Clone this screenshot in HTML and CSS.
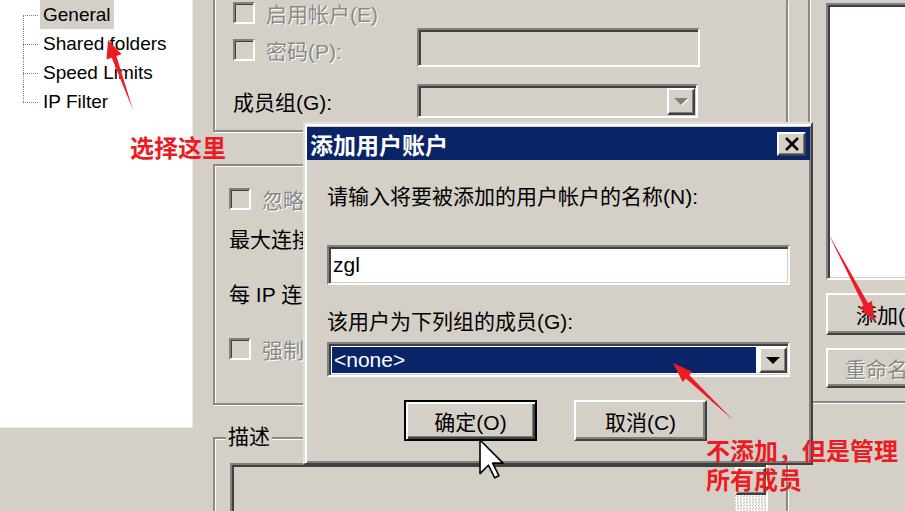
FILE: index.html
```html
<!DOCTYPE html>
<html lang="zh-CN">
<head>
    <meta charset="UTF-8">
    <meta name="viewport" content="width=device-width, initial-scale=1.0">
    <title>Users</title>
    <link rel="stylesheet" href="styles.css">
</head>
<body>
    <div class="screen">
        <div class="tree-col">
            <ul class="tree">
                <li class="selected"><span>General</span></li>
                <li><span>Shared folders</span></li>
                <li><span>Speed Limits</span></li>
                <li><span>IP Filter</span></li>
            </ul>
        </div>

        <div class="form-col">
            <div class="group group-account">
                <div class="row row-enable">
                    <span class="check"></span><span class="disabled">启用帐户(E)</span>
                </div>
                <div class="row row-pass">
                    <div class="field-label"><span class="check"></span><span class="disabled">密码(P):</span></div>
                    <div class="edit edit-pass"></div>
                </div>
                <div class="row row-member">
                    <div class="field-label">成员组(G):</div>
                    <div class="edit combo-off"><span class="drop drop-off"><i></i></span></div>
                </div>
            </div>

            <div class="group group-conn">
                <div class="row conn-a"><span class="check"></span><span class="disabled">忽略服务器的用户限制</span></div>
                <div class="row conn-b">最大连接数:</div>
                <div class="row conn-c">每 IP 连接限制:</div>
                <div class="row conn-d"><span class="check"></span><span class="disabled">强制 SSL 用户登录</span></div>
            </div>

            <div class="group group-desc">
                <span class="legend">描述</span>
                <div class="edit memo">
                    <div class="scroll"><span class="scroll-btn"></span><span class="scroll-track"></span></div>
                </div>
            </div>
        </div>

        <div class="side-col">
            <div class="group group-users">
                <div class="edit user-list"></div>
                <button class="btn side-btn">添加(A)</button>
                <button class="btn side-btn btn-off">重命名(R)</button>
            </div>
        </div>
    </div>

    <!-- modal dialog -->
    <div class="dialog">
        <div class="titlebar">
            <span>添加用户账户</span>
            <span class="close">
                <svg width="16" height="14" viewBox="0 0 16 14"><path d="M2 1 L14 13 M14 1 L2 13" stroke="#000" stroke-width="2.6" fill="none"/></svg>
            </span>
        </div>
        <div class="dialog-body">
            <div class="prompt">请输入将要被添加的用户帐户的名称(N):</div>
            <div class="edit name-edit">zgl</div>
            <div class="prompt prompt-group">该用户为下列组的成员(G):</div>
            <div class="edit group-combo">
                <span class="value">&lt;none&gt;</span>
                <span class="drop"><i></i></span>
            </div>
            <div class="dialog-buttons">
                <button class="btn btn-default">确定(O)</button>
                <button class="btn">取消(C)</button>
            </div>
        </div>
    </div>

    <!-- red annotations and mouse pointer -->
    <svg class="marks" width="905" height="511" viewBox="0 0 905 511">
        <polygon fill="#ec1c24" points="133,110 111.7,57.8 106.5,59.6 108,40 121.6,54.3 116.4,56.1"/>
        <polygon fill="#ec1c24" points="733,420 685.8,378.6 682.7,381.9 673,363 692.3,371.7 689.2,375"/>
        <polygon fill="#ec1c24" points="828,233 867.9,303.1 871.9,301 875,322 859.5,307.6 863.5,305.5"/>
        <polygon fill="#fff" stroke="#000" stroke-width="1.6" stroke-linejoin="round"
            points="480,440 480,473.6 488.4,465.2 494.7,477.8 498.9,475.7 492.6,463.1 503.1,463.1"/>
    </svg>
    <div class="note note-select">选择这里</div>
    <div class="note note-group">不添加，但是管理<br>所有成员</div>
</body>
</html>
```

FILE: styles.css
```css
* {
    box-sizing: border-box;
}
body {
    margin: 0;
    width: 905px;
    height: 511px;
    overflow: hidden;
    position: relative;
    background: #d4d0c8;
    font-family: "Liberation Sans", "Noto Sans CJK SC", sans-serif;
    font-size: 21px;
    color: #000;
}
.screen {
    display: flex;
    width: 905px;
    height: 511px;
    overflow: hidden;
}

/* tree on the left */
.tree-col {
    width: 213px;
    flex: none;
}
.tree {
    list-style: none;
    margin: 0;
    padding: 0;
    width: 193px;
    height: 428px;
    background: #fff;
    border-right: 1px solid #ebe9e4;
    border-bottom: 1px solid #ebe9e4;
    font-size: 19px;
}
.tree li {
    position: relative;
    height: 29px;
    padding-left: 40px;
    display: flex;
    align-items: center;
}
.tree li span {
    padding: 0 3px;
    line-height: 29px;
}
.tree li.selected span {
    background: #d4d0c8;
}
.tree li::before {
    content: "";
    position: absolute;
    left: 23px;
    width: 15px;
    top: 50%;
    border-top: 1px dotted #808080;
}
.tree li::after {
    content: "";
    position: absolute;
    left: 23px;
    top: 0;
    bottom: 0;
    border-left: 1px dotted #808080;
}
.tree li:first-child::after {
    top: 50%;
}
.tree li:last-child::after {
    bottom: 50%;
}

/* group boxes */
.form-col {
    width: 575px;
    flex: none;
    display: flex;
    flex-direction: column;
}
.group {
    flex: none;
    border: 2px solid #8c8a85;
    box-shadow: inset 1px 1px 0 #fff, 1px 1px 0 #fff;
}
.row {
    display: flex;
    align-items: center;
    white-space: nowrap;
}
.check {
    width: 22px;
    height: 22px;
    flex: none;
    border: 2px solid;
    border-color: #808080 #fff #fff #808080;
    box-shadow: inset 1px 1px 0 #404040;
    background: #d4d0c8;
    margin-right: 11px;
}
.disabled {
    color: #8a8985;
    text-shadow: 1px 1px 0 #fff;
}
.edit {
    border: 2px solid;
    border-color: #808080 #fff #fff #808080;
    box-shadow: inset 2px 2px 0 #404040, inset -1px -1px 0 #d4d0c8;
    background: #d4d0c8;
}

.group-account {
    height: 132px;
    border-top: 0;
    padding: 2px 0 0 18px;
    box-shadow: inset 1px 0 0 #fff, 1px 1px 0 #fff;
}
.row-enable {
    height: 22px;
}
.row-pass {
    height: 39px;
    margin-top: 4px;
}
.row-member {
    height: 34px;
    margin-top: 17px;
}
.field-label {
    width: 184px;
    display: flex;
    align-items: center;
}
.row-pass .field-label {
    padding-top: 5px;
}
.edit-pass {
    width: 283px;
    height: 39px;
}
.combo-off {
    width: 281px;
    height: 34px;
    display: flex;
    justify-content: flex-end;
    padding: 2px 1px 1px 2px;
}
.drop {
    width: 28px;
    display: flex;
    align-items: center;
    justify-content: center;
    background: #d4d0c8;
    border: 2px solid;
    border-color: #fff #404040 #404040 #fff;
    box-shadow: inset -1px -1px 0 #808080;
}
.drop i {
    width: 0;
    height: 0;
    border-left: 7px solid transparent;
    border-right: 7px solid transparent;
    border-top: 7px solid #000;
}
.drop-off i {
    border-top-color: #808080;
    filter: drop-shadow(1px 1px 0 #fff);
}

.group-conn {
    margin-top: 32px;
    height: 241px;
    padding: 22px 0 0 14px;
}
.conn-a {
    height: 22px;
}
.conn-b {
    height: 24px;
    margin-top: 16px;
}
.conn-c {
    height: 24px;
    margin-top: 31px;
}
.conn-d {
    height: 23px;
    margin-top: 32px;
}

.group-desc {
    margin-top: 32px;
    height: 140px;
}
.legend {
    display: block;
    width: max-content;
    margin: -14px 0 0 11px;
    padding: 0 2px;
    line-height: 24px;
    background: #d4d0c8;
}
.memo {
    width: 538px;
    height: 80px;
    margin: 14px 0 0 15px;
    display: flex;
    justify-content: flex-end;
    padding: 2px 0 0;
}
.scroll {
    width: 31px;
    display: flex;
    flex-direction: column;
}
.scroll-btn {
    height: 28px;
    background: #d4d0c8;
    border: 2px solid;
    border-color: #fff #404040 #404040 #fff;
    box-shadow: inset -1px -1px 0 #808080;
}
.scroll-track {
    flex: 1;
    background: repeating-conic-gradient(#fff 0 25%, #d4d0c8 0 50%) 0 0 / 3px 3px;
}

/* right column */
.side-col {
    width: 160px;
    flex: none;
    margin-left: 20px;
}
.group-users {
    height: 403px;
    border-top: 0;
    border-right: 0;
    padding: 3px 0 0 16px;
    box-shadow: inset 1px 0 0 #fff, 0 1px 0 #fff;
    display: flex;
    flex-direction: column;
}
.user-list {
    width: 130px;
    height: 277px;
    flex: none;
    background: #fff;
}

/* buttons */
.btn {
    font: inherit;
    color: #000;
    margin: 0;
    padding: 0;
    background: #d4d0c8;
    border: 2px solid;
    border-color: #fff #404040 #404040 #fff;
    box-shadow: inset -2px -2px 0 #808080;
}
.side-btn {
    width: 130px;
    height: 42px;
    margin-top: 13px;
    flex: none;
}
.side-btn.btn-off {
    height: 40px;
    color: #8a8985;
    text-shadow: 1px 1px 0 #fff;
}

/* dialog */
.dialog {
    position: absolute;
    left: 303px;
    top: 122px;
    width: 510px;
    height: 343px;
    background: #d4d0c8;
    border: 2px solid;
    border-color: #e0ded9 #404040 #404040 #e0ded9;
    box-shadow: inset 2px 2px 0 #fff, inset -2px -2px 0 #808080;
    padding: 3px 1px 0 2px;
}
.titlebar {
    height: 33px;
    background: #0a246a;
    color: #fff;
    font-weight: bold;
    font-size: 23px;
    display: flex;
    align-items: center;
    justify-content: space-between;
    padding: 0 4px 0 3px;
}
.close {
    width: 29px;
    height: 24px;
    display: flex;
    align-items: center;
    justify-content: center;
    background: #d4d0c8;
    border: 2px solid;
    border-color: #fff #404040 #404040 #fff;
    box-shadow: inset -1px -1px 0 #808080;
}
.dialog-body {
    display: flex;
    flex-direction: column;
    padding: 0 20px;
}
.prompt {
    margin-top: 26px;
    line-height: 22px;
}
.name-edit {
    margin-top: 37px;
    height: 40px;
    background: #fff;
    padding-left: 4px;
    display: flex;
    align-items: center;
}
.prompt-group {
    margin-top: 26px;
}
.group-combo {
    margin-top: 9px;
    height: 35px;
    background: #fff;
    display: flex;
    padding: 3px 1px 2px 3px;
}
.group-combo .value {
    flex: 1;
    background: #0a246a;
    color: #fff;
    padding-left: 2px;
    display: flex;
    align-items: center;
    margin-right: 3px;
}
.dialog-buttons {
    display: flex;
    gap: 37px;
    margin-top: 23px;
    padding-left: 77px;
}
.dialog-buttons .btn {
    width: 133px;
    height: 41px;
}
.btn-default {
    border: 2px solid #000;
    box-shadow: inset 2px 2px 0 #fff, inset -2px -2px 0 #404040, inset -3px -3px 0 #808080;
}

/* annotations */
.marks {
    position: absolute;
    left: 0;
    top: 0;
    pointer-events: none;
}
.note {
    position: absolute;
    color: #ec1c24;
    font-family: "Noto Sans CJK SC", sans-serif;
    font-weight: bold;
    font-size: 24px;
    line-height: 29px;
}
.note-select {
    left: 130px;
    top: 132px;
}
.note-group {
    left: 706px;
    top: 435px;
}
```
